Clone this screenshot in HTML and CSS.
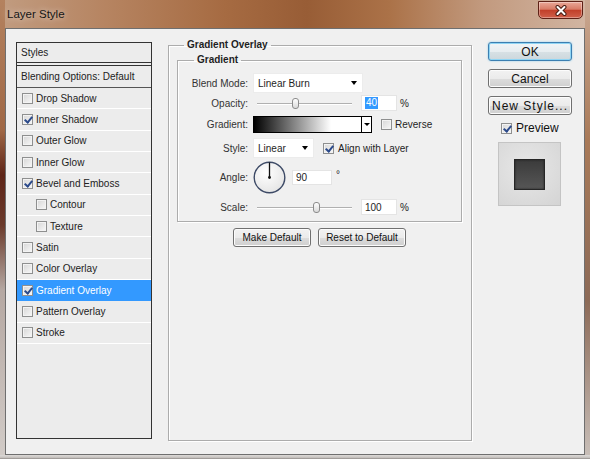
FILE: index.html
```html
<!DOCTYPE html>
<html lang="en">
<head>
    <meta charset="UTF-8">
    <meta name="viewport" content="width=device-width, initial-scale=1.0">
    <title>Layer Style</title>
    <link rel="stylesheet" href="styles.css">
</head>
<body>
    <div class="window">
        <div class="titlebar">
            <span class="title">Layer Style</span>
            <button class="close-btn" aria-label="Close">
                <svg width="14" height="11" viewBox="0 0 14 11">
                    <path d="M3.5 2 L10.5 9 M10.5 2 L3.5 9" stroke="#4a1e14" stroke-width="4" stroke-linecap="round"/>
                    <path d="M3.5 2 L10.5 9 M10.5 2 L3.5 9" stroke="#fff" stroke-width="2" stroke-linecap="round"/>
                </svg>
            </button>
        </div>

        <div class="client">
            <!-- left: list of styles -->
            <div class="styles-list">
                <div class="list-head">Styles</div>
                <div class="list-blend">Blending Options: Default</div>
                <div class="item"><span class="cb"></span>Drop Shadow</div>
                <div class="item"><span class="cb on"></span>Inner Shadow</div>
                <div class="item"><span class="cb"></span>Outer Glow</div>
                <div class="item"><span class="cb"></span>Inner Glow</div>
                <div class="item"><span class="cb on"></span>Bevel and Emboss</div>
                <div class="item sub"><span class="cb"></span>Contour</div>
                <div class="item sub"><span class="cb"></span>Texture</div>
                <div class="item"><span class="cb"></span>Satin</div>
                <div class="item"><span class="cb"></span>Color Overlay</div>
                <div class="item active"><span class="cb on"></span>Gradient Overlay</div>
                <div class="item"><span class="cb"></span>Pattern Overlay</div>
                <div class="item"><span class="cb"></span>Stroke</div>
            </div>

            <!-- middle: gradient overlay settings -->
            <fieldset class="group">
                <legend>Gradient Overlay</legend>
                <fieldset class="sub-group">
                    <legend>Gradient</legend>

                    <div class="field f-blend">
                        <label>Blend Mode:</label>
                        <div class="select wide">Linear Burn<span class="caret"></span></div>
                    </div>

                    <div class="field f-opacity">
                        <label>Opacity:</label>
                        <div class="slider"><span class="thumb" style="left: 40.5%"></span></div>
                        <div class="num"><span class="sel">40</span></div>
                        <span class="unit">%</span>
                    </div>

                    <div class="field f-gradient">
                        <label>Gradient:</label>
                        <div class="grad">
                            <div class="grad-fill"></div>
                            <div class="grad-drop"><span class="caret small"></span></div>
                        </div>
                        <span class="cb gap"></span><span class="cb-text">Reverse</span>
                    </div>

                    <div class="field f-style">
                        <label>Style:</label>
                        <div class="select narrow">Linear<span class="caret"></span></div>
                        <span class="cb on gap"></span><span class="cb-text">Align with Layer</span>
                    </div>

                    <div class="field f-angle">
                        <label>Angle:</label>
                        <svg class="dial" width="33" height="33" viewBox="0 0 33 33">
                            <defs>
                                <radialGradient id="dialFill" cx="0.4" cy="0.35" r="0.7">
                                    <stop offset="0" stop-color="#ffffff"/>
                                    <stop offset="1" stop-color="#e4e4e4"/>
                                </radialGradient>
                            </defs>
                            <circle cx="16.5" cy="16.5" r="15.3" fill="url(#dialFill)" stroke="#3d4a66" stroke-width="1.4"/>
                            <line x1="16.5" y1="16.5" x2="16.5" y2="1.5" stroke="#111" stroke-width="1.3"/>
                            <circle cx="16.5" cy="16.5" r="1.4" fill="#111"/>
                        </svg>
                        <div class="num angle">90</div>
                        <span class="deg">&deg;</span>
                    </div>

                    <div class="field f-scale">
                        <label>Scale:</label>
                        <div class="slider"><span class="thumb" style="left: 63%"></span></div>
                        <div class="num">100</div>
                        <span class="unit">%</span>
                    </div>
                </fieldset>

                <div class="defaults">
                    <button class="btn make">Make Default</button>
                    <button class="btn reset">Reset to Default</button>
                </div>
            </fieldset>

            <!-- right: dialog actions -->
            <div class="actions">
                <button class="btn big default">OK</button>
                <button class="btn big">Cancel</button>
                <button class="btn big spaced">New Style...</button>
                <div class="preview-toggle"><span class="cb on"></span>Preview</div>
                <div class="preview-box"><div class="swatch"></div></div>
            </div>
        </div>
    </div>
</body>
</html>
```

FILE: styles.css
```css
* {
    box-sizing: border-box;
}

html, body {
    margin: 0;
    padding: 0;
}

body {
    width: 590px;
    height: 459px;
    overflow: hidden;
    font-family: "Liberation Sans", Arial, sans-serif;
    font-size: 10px;
    color: #1e1e1e;
}

/* window frame */
.window {
    height: 459px;
    display: flex;
    flex-direction: column;
    background:
        linear-gradient(#dcd9d7, #c9c5c2 60%, #8f8b88) left bottom / 100% 4px no-repeat,
        linear-gradient(to bottom, #b4825f 0, #a06846 130px, #5e2518 175px, #6b3a2b 225px, #b5a8a2 290px, #d2ccc8 100%) left top / 5px 100% no-repeat,
        linear-gradient(to bottom, #caa892 0, #a97a58 140px, #8c6a57 300px, #c9c0ba 100%) right top / 5px 100% no-repeat,
        linear-gradient(to right, #c19c80 0, #b68461 18%, #a66b42 38%, #985d36 52%, #ab7248 66%, #c29a7f 82%, #d2b6a3 100%);
}

.titlebar {
    height: 28px;
    display: flex;
    justify-content: space-between;
    align-items: flex-start;
    padding: 0 7px;
}

.title {
    font-size: 11.5px;
    color: #151515;
    margin-top: 8px;
    text-shadow: 0 0 6px rgba(255, 255, 255, 0.7);
}

.close-btn {
    width: 45px;
    height: 18px;
    margin-top: 1px;
    padding: 0;
    border: 1px solid #5e2116;
    border-radius: 0 0 5px 5px;
    background: linear-gradient(#eaa898, #d87b66 45%, #c2402a 52%, #d0604a);
    box-shadow: inset 0 0 0 1px rgba(255, 255, 255, 0.35);
    display: flex;
    align-items: center;
    justify-content: center;
}

.client {
    flex: 1;
    margin: 0 5px 4px;
    border: 1px solid #6f6f6f;
    background: #f0f0f0;
    display: flex;
    align-items: flex-start;
    padding: 10px 0 0 10px;
}

/* styles list */
.styles-list {
    width: 136px;
    height: 397px;
    margin-top: 3px;
    border: 1px solid #333;
    background: #ececec;
    color: #222;
}

.list-head {
    height: 20px;
    line-height: 19px;
    padding-left: 4px;
    border-bottom: 1px solid #333;
}

.list-blend {
    height: 23px;
    margin-top: 2px;
    line-height: 21px;
    padding-left: 4px;
    border-top: 1px solid #333;
    border-bottom: 1px solid #555;
}

.item {
    height: 21.33px;
    display: flex;
    align-items: center;
    padding-left: 5px;
    border-bottom: 1px solid #fff;
}

.item.sub {
    padding-left: 19px;
}

.item.active {
    background: #3399ff;
    color: #fff;
    border-bottom-color: #3399ff;
}

/* checkbox */
.cb {
    flex: none;
    position: relative;
    width: 11px;
    height: 11px;
    margin-right: 3px;
    border: 1px solid #8e8f8f;
    background: linear-gradient(135deg, #d6d6d6, #f8f8f8);
    box-shadow: inset 0 0 0 1px #f3f3f3;
}

.cb.on::after {
    content: '';
    position: absolute;
    left: 3px;
    top: 0;
    width: 3px;
    height: 6px;
    border: solid #2b4a8b;
    border-width: 0 2px 2px 0;
    transform: rotate(40deg);
}

.cb.gap {
    margin-left: 9px;
}

.cb-text {
    margin-left: 1px;
}

/* fieldsets */
.group {
    width: 304px;
    height: 402px;
    min-width: 0;
    margin: 0 0 0 16px;
    padding: 0 9px 0 8px;
    border: 1px solid #acacac;
    box-shadow: inset 1px 1px 0 #fff, 1px 1px 0 #fff;
}

.group > legend {
    margin-left: 7px;
    padding: 0 3px;
    font-weight: bold;
    line-height: 12px;
}

.sub-group {
    min-width: 0;
    margin: 3px 0 0;
    padding: 7px 0 0;
    border: 1px solid #acacac;
    box-shadow: inset 1px 1px 0 #fff, 1px 1px 0 #fff;
}

.sub-group > legend {
    margin-left: 16px;
    padding: 0 3px;
    font-weight: bold;
    line-height: 12px;
}

.field {
    display: flex;
    align-items: center;
}

.field label {
    flex: none;
    width: 70px;
    margin-right: 5px;
    text-align: right;
    color: #333;
}

.f-blend { height: 20px; }
.f-opacity { height: 20px; }
.f-gradient { height: 22px; }
.f-style { height: 26px; }
.f-angle { height: 32px; }
.f-scale { height: 28px; }

.select {
    height: 20px;
    display: flex;
    align-items: center;
    justify-content: space-between;
    padding: 0 5px 0 4px;
    background: #fff;
    border: 1px solid #ececec;
}

.select.wide { width: 110px; }
.select.narrow { width: 61px; }

.caret {
    width: 0;
    height: 0;
    border-left: 3.5px solid transparent;
    border-right: 3.5px solid transparent;
    border-top: 4px solid #000;
}

.caret.small {
    border-left-width: 3px;
    border-right-width: 3px;
    border-top-width: 3px;
}

.slider {
    flex: none;
    position: relative;
    width: 95px;
    height: 11px;
    margin-left: 4px;
}

.slider::before {
    content: '';
    position: absolute;
    left: 0;
    right: 0;
    top: 5px;
    height: 1px;
    background: #b0b0b0;
    box-shadow: 0 1px 0 #fff;
}

.thumb {
    position: absolute;
    top: 0;
    width: 7px;
    height: 11px;
    margin-left: -3.5px;
    border: 1px solid #8c8c8c;
    border-radius: 3px;
    background: linear-gradient(#ffffff, #d9d9d9);
}

.num {
    flex: none;
    width: 36px;
    height: 16px;
    margin-left: 9px;
    padding-left: 3px;
    display: flex;
    align-items: center;
    background: #fff;
    border: 1px solid #e4e4e4;
}

.num.angle {
    width: 40px;
    margin-left: 6px;
    height: 15px;
}

.sel {
    background: #3399ff;
    color: #fff;
    padding: 0 1px;
    line-height: 12px;
}

.unit {
    margin-left: 3px;
}

.deg {
    margin-left: 4px;
    margin-bottom: 5px;
}

.grad {
    flex: none;
    width: 119px;
    height: 17px;
    display: flex;
    border: 1px solid #000;
}

.grad-fill {
    flex: 1;
    background: linear-gradient(to right, #000, #fff 72%);
}

.grad-drop {
    width: 10px;
    display: flex;
    align-items: center;
    justify-content: center;
    background: #fff;
    border-left: 1px solid #000;
}

.f-gradient .cb-text {
    margin-left: 0;
}

.dial {
    flex: none;
    margin-top: 1px;
}

/* buttons */
.btn {
    height: 19px;
    padding: 0;
    font-family: "Liberation Sans", Arial, sans-serif;
    font-size: 10px;
    color: #111;
    border: 1px solid #707070;
    border-radius: 3px;
    background: linear-gradient(#f2f2f2 0, #ebebeb 50%, #dddddd 50%, #cfcfcf 100%);
    box-shadow: inset 0 0 0 1px #fcfcfc;
}

.defaults {
    display: flex;
    justify-content: center;
    gap: 7px;
    margin-top: 6px;
}

.btn.make { width: 78px; }
.btn.reset { width: 88px; }

.actions {
    width: 84px;
    margin: 3px 0 0 16px;
    display: flex;
    flex-direction: column;
}

.btn.big {
    font-size: 12px;
    margin-bottom: 8px;
}

.btn.default {
    border-color: #3c7fb1;
    background: linear-gradient(#f1f5f7 0, #e7edf0 50%, #d8e1e5 50%, #ccd7dc 100%);
    box-shadow: inset 0 0 0 1px #8fd5f4, 0 0 2px #86cbea;
}

.btn.spaced {
    letter-spacing: 1px;
}

.preview-toggle {
    height: 12px;
    margin-top: -1px;
    padding-left: 13px;
    display: flex;
    align-items: center;
    font-size: 12px;
    color: #111;
}

.preview-toggle .cb {
    margin-right: 4px;
}

.preview-box {
    width: 63px;
    height: 64px;
    margin: 8px 0 0 10px;
    display: flex;
    align-items: center;
    justify-content: center;
    border: 1px solid #c4c4c4;
    background: radial-gradient(circle at 45% 40%, #e8e8e8, #d4d4d4);
}

.swatch {
    width: 31px;
    height: 31px;
    border: 1px solid #262626;
    background: linear-gradient(#3b3b3b, #565656);
    box-shadow: inset 0 0 2px #1c1c1c;
}
```
